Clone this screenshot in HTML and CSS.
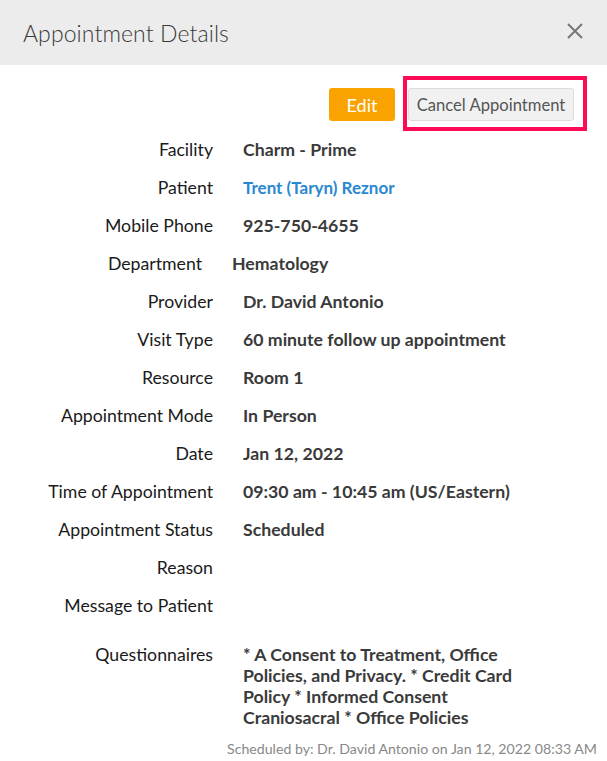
FILE: index.html
```html
<!DOCTYPE html>
<html>
<head>
<meta charset="utf-8">
<link rel="stylesheet" href="styles.css">
</head>
<body>
<div class="modal">
  <div class="modal-header">
    <h1 class="modal-title">Appointment Details</h1>
    <button class="close" aria-label="Close">
      <svg width="18" height="18" viewBox="0 0 18 18"><path d="M2 2 L16 16 M16 2 L2 16" stroke="#777" stroke-width="2" fill="none"/></svg>
    </button>
  </div>
  <div class="modal-body">
    <div class="actions">
      <button class="btn btn-edit">Edit</button>
      <span class="highlight-wrap">
        <button class="btn btn-cancel">Cancel Appointment</button>
        <span class="highlight"></span>
      </span>
    </div>
    <div class="details">
      <div class="row"><div class="label">Facility</div><div class="value">Charm - Prime</div></div>
      <div class="row"><div class="label">Patient</div><div class="value"><a class="link" href="#">Trent (Taryn) Reznor</a></div></div>
      <div class="row"><div class="label">Mobile Phone</div><div class="value">925-750-4655</div></div>
      <div class="row row-shift"><div class="label">Department</div><div class="value">Hematology</div></div>
      <div class="row"><div class="label">Provider</div><div class="value">Dr. David Antonio</div></div>
      <div class="row"><div class="label">Visit Type</div><div class="value">60 minute follow up appointment</div></div>
      <div class="row"><div class="label">Resource</div><div class="value">Room 1</div></div>
      <div class="row"><div class="label">Appointment Mode</div><div class="value">In Person</div></div>
      <div class="row"><div class="label">Date</div><div class="value">Jan 12, 2022</div></div>
      <div class="row"><div class="label">Time of Appointment</div><div class="value">09:30 am - 10:45 am (US/Eastern)</div></div>
      <div class="row"><div class="label">Appointment Status</div><div class="value">Scheduled</div></div>
      <div class="row"><div class="label">Reason</div><div class="value"></div></div>
      <div class="row"><div class="label">Message to Patient</div><div class="value"></div></div>
      <div class="row row-multi"><div class="label">Questionnaires</div><div class="value">* A Consent to Treatment, Office Policies, and Privacy. * Credit Card Policy * Informed Consent Craniosacral * Office Policies</div></div>
    </div>
    <div class="footer-note">Scheduled by: Dr. David Antonio on Jan 12, 2022 08:33 AM</div>
  </div>
</div>
</body>
</html>
```

FILE: styles.css
```css
* { box-sizing: border-box; }
html, body { margin: 0; padding: 0; background: #fff; }
body { font-family: Lato, "Open Sans", sans-serif; color: #1a1a1a; }

.modal-header {
  height: 65px;
  background: #ececec;
  display: flex;
  align-items: center;
  justify-content: space-between;
  padding: 0 23px 0 23px;
}
.modal-title {
  margin: 0;
  font-size: 23px;
  font-weight: 300;
  color: #3a3a3a;
  letter-spacing: 0.1px;
}
.close {
  border: 0;
  background: transparent;
  padding: 0;
  display: flex;
  margin-top: -4px;
}

.modal-body { padding: 23px 33px 0 0; }

.actions {
  display: flex;
  justify-content: flex-end;
  gap: 13px;
  height: 43px;
  align-items: flex-start;
}
.btn {
  font-family: Lato, sans-serif;
  height: 33px;
  border-radius: 3px;
  cursor: pointer;
  padding: 0;
}
.btn-edit {
  width: 66px;
  background: #f9a200;
  color: #fff;
  border: 0;
  font-size: 18px;
}
.btn-cancel {
  width: 166px;
  background: #f1f1f1;
  border: 1px solid #dcdcdc;
  color: #555;
  font-size: 16.6px;
}
.highlight-wrap { position: relative; display: inline-flex; }
.highlight {
  position: absolute;
  left: -5px;
  right: -13px;
  top: -12px;
  bottom: -10px;
  border: 4px solid #ff0a54;
  pointer-events: none;
}

.row {
  display: flex;
  align-items: flex-start;
  line-height: 38px;
}
.label {
  width: 213px;
  text-align: right;
  font-size: 17.7px;
  color: #1a1a1a;
  flex-shrink: 0;
}
.value {
  margin-left: 30px;
  font-size: 17.7px;
  font-weight: 700;
  color: #3a3a3a;
}
.row-shift { margin-left: -11px; }
.link { color: #2a88d0; text-decoration: none; font-size: 17px; }

.row-multi {
  line-height: 21px;
  margin-top: 19px;
}
.row-multi .value { width: 285px; }

.footer-note {
  text-align: right;
  font-size: 14.15px;
  color: #888;
  margin-top: 12px;
  margin-right: -23px;
}
```
